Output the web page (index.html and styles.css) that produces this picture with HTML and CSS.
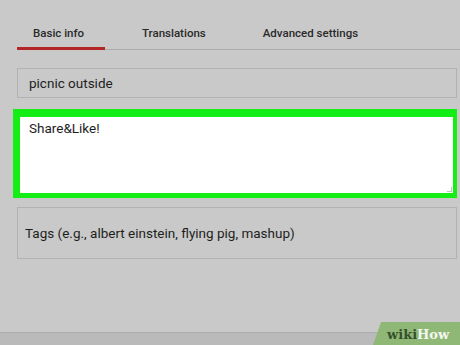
FILE: index.html
```html
<!DOCTYPE html>
<html lang="en">

<head>
  <meta charset="UTF-8">
  <meta name="viewport" content="width=device-width, initial-scale=1.0">
  <title>Basic info</title>
  <link rel="stylesheet" href="styles.css">
</head>

<body>
  <div class="page">
    <div class="tabs">
      <div class="tab active">Basic info</div>
      <div class="tab tab-trans">Translations</div>
      <div class="tab tab-adv">Advanced settings</div>
    </div>

    <div class="form">
      <div class="field title">picnic outside</div>
      <div class="field desc">
        Share&amp;Like!
        <span class="grip"></span>
      </div>
      <div class="field tags">Tags (e.g., albert einstein, flying pig, mashup)</div>
    </div>

    <div class="bottom-bar"></div>

    <div class="badge">
      <span class="wiki">wiki</span><span class="how">How</span>
    </div>
  </div>
</body>

</html>
```

FILE: styles.css
```css
body {
  margin: 0;
  padding: 0;
  font-family: Roboto, "Liberation Sans", sans-serif;
  background-color: #c9c9c9;
  color: #222;
}

.page {
  position: relative;
  height: 345px;
  display: flex;
  flex-direction: column;
  overflow: hidden;
}

.tabs {
  display: flex;
  margin: 17px 0 0 17px;
  border-bottom: 1px solid #acacac;
  height: 32px;
}

.tab {
  font-size: 11.5px;
  font-weight: 500;
  color: #2a2a2a;
  line-height: 33px;
}

.tab.active {
  width: 88px;
  box-sizing: border-box;
  padding-left: 16px;
  border-bottom: 3px solid #b42626;
  margin-bottom: -1px;
}

.tab-trans {
  margin-left: 37px;
}

.tab-adv {
  margin-left: 57px;
}

.form {
  display: flex;
  flex-direction: column;
  padding: 0 3px 0 17px;
  margin-top: 18px;
}

.field {
  border: 1px solid #b2b2b2;
  font-size: 13.5px;
  color: #1e1e1e;
}

.title {
  height: 28px;
  line-height: 28px;
  padding-left: 11px;
}

.desc {
  position: relative;
  margin: 11px 0 0 -4px;
  height: 74px;
  background-color: #fff;
  border-color: #14ee14;
  border-style: solid;
  border-width: 8px 4px 5px 7px;
  padding: 2px 0 0 9px;
  line-height: 18px;
  box-sizing: content-box;
}

.grip {
  position: absolute;
  right: 1px;
  bottom: 1px;
  width: 4px;
  height: 4px;
  border-right: 1px solid #999;
  border-bottom: 1px solid #999;
  opacity: 0.6;
}

.tags {
  margin-top: 9px;
  height: 50px;
  line-height: 50px;
  padding-left: 7px;
}

.bottom-bar {
  margin-top: auto;
  height: 12px;
  border-top: 1px solid #adadad;
  background-color: #bababa;
}

.badge {
  position: absolute;
  right: 0;
  bottom: 0;
  width: 79px;
  height: 23px;
  padding-left: 8px;
  background-color: #8fb877;
  clip-path: polygon(8px 0, 100% 0, 100% 100%, 0 100%);
  font-family: "DejaVu Serif", "Liberation Serif", serif;
  font-weight: bold;
  font-size: 13px;
  line-height: 25px;
}

.wiki {
  color: #35502a;
  padding-left: 6px;
}

.how {
  color: #f4f7f0;
}
```
